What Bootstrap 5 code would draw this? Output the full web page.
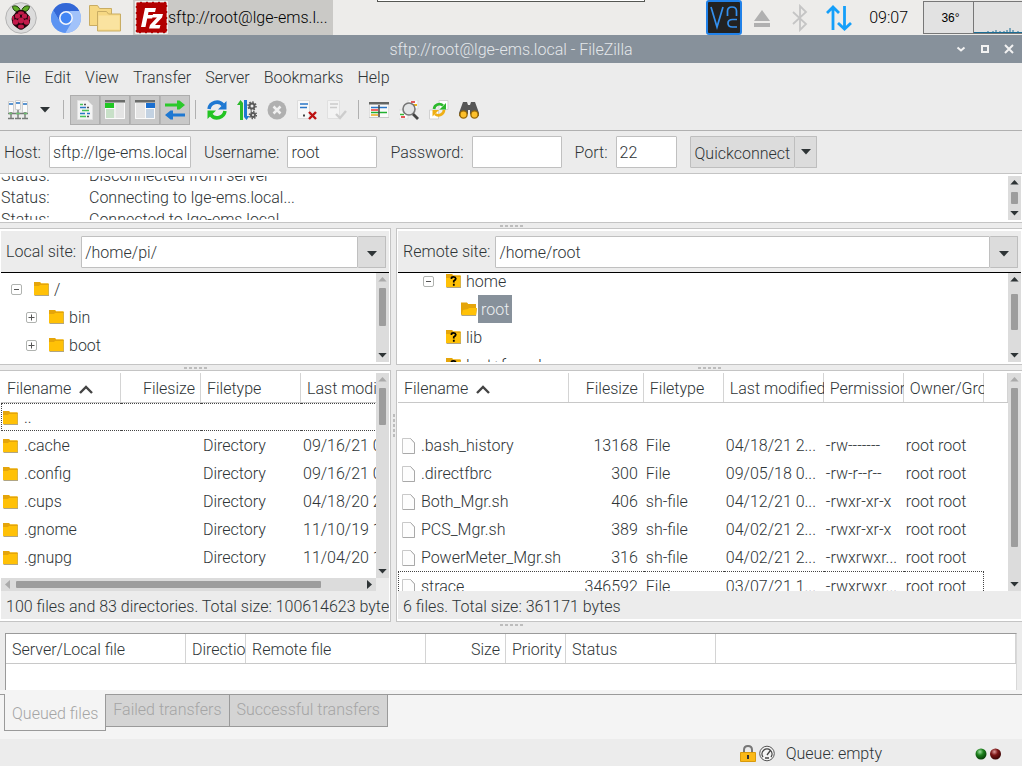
<!DOCTYPE html>
<html lang="en">
<head>
<meta charset="utf-8">
<meta name="viewport" content="width=device-width, initial-scale=1">
<title>sftp://root@lge-ems.local - FileZilla</title>
<link href="https://cdn.jsdelivr.net/npm/bootstrap@5.3.0/dist/css/bootstrap.min.css" rel="stylesheet">
<style>
:root{--ui:#ececec;--line:#c4c4c4;--ink:#2e3436;--slate:#87919b;--ctl:#dcdcdc;--dark:#9a9a9a}
body{font-family:Roboto,"Liberation Sans",sans-serif;font-weight:300;font-size:16px;line-height:20px;color:var(--ink);background:var(--ui);overflow:hidden}
svg{display:block;flex:none}
button{font:inherit;color:inherit;background:none;border:0;padding:0}
.desk{height:35px;background:#edecea;color:#000}
.launch{width:32px;height:32px}
.task{width:200px;height:35px;background:#cac9c6;padding-left:2px;margin-left:12px}
.notch{width:268px;height:2px;left:50%;transform:translateX(-50%);top:0;background:#fff;border:1px solid #555753;border-top:0}
.gauge-box{width:51px;height:33px;border:1px solid #777;background:#e2e2e2;font-family:"Liberation Sans",sans-serif;font-weight:400;font-size:12px;padding-left:4px;margin-left:15px}
.graph-box{width:48px;height:33px;border:1px solid #777;border-left:0;border-right:0;background:#e2e2e2}
.title-strip{height:28px;background:var(--slate);color:#e4e7ea;padding-top:1px}
.win-btns{right:5px;top:7px}
.menus{height:28px;padding:2px 0 0 6px;gap:14px}
.menus a{color:inherit;text-decoration:none}
.tools{height:40px;padding:0 3px 2px;border-bottom:1px solid #b0b0b0}
.tool{width:30px;height:30px;display:flex;align-items:center;justify-content:center}
.tool.on{background:#c8c8c8;border:1px solid #adadad}
.tool.on+.tool.on{border-left-color:#b4b4b4}
.vsep{width:1px;height:19px;background:#b0b0b0}
.quick{height:42px;padding:0 4px}
.quick label{padding-top:2px}
.quick input{margin:0 13px 0 8px}
.field{height:32px;border:1px solid #c0c0c0;border-radius:1px;background:#fff;padding:0 3px;color:var(--ink);font:inherit;min-width:0}
.btn-flat{height:32px;background:var(--ctl);border:1px solid #bebebe;border-radius:1px}
.frame{background:#fff;border:1px solid var(--line);padding:2px 1px}
.edge-l{border-left:0}
.edge-r{border-right:0}
.log{height:50px}
.log-lines{line-height:22px}
.log-lines span:first-child{display:inline-block;width:88px}
.grip-h{height:5px;display:flex;align-items:center;justify-content:center}
.grip-h::after{content:"";width:23px;height:2px;background:repeating-linear-gradient(90deg,#bdbdbd 0 3px,transparent 3px 5px)}
.grip-v{width:5px;display:flex;align-items:center;justify-content:center}
.grip-v::after{content:"";width:2px;height:23px;background:repeating-linear-gradient(#bdbdbd 0 3px,transparent 3px 5px)}
.side-l{flex:391 1 0;min-width:0}
.side-r{flex:626 1 0;min-width:0}
.tree-frame{height:137px}
.site{height:42px;background:var(--ui);border-bottom:1px solid #000;padding:5px 3px 4px 5px}
.site label{line-height:32px;margin-right:5px}
.combo-btn{width:28px}
.clip{overflow:hidden;min-width:0}
.branch{height:28px;display:flex;align-items:center;list-style:none}
.knob{width:11px;height:11px;border:1px solid #b0b3b0;border-radius:2px;background:#fff;margin-right:12px}
.tree{padding:2px 0 0 10px;margin:0}
.tree.scrolled{margin-top:-6px;padding:0 0 0 25px}
.tag{padding:0 3px;margin-left:2px;height:28px;line-height:30px}
.tag.picked{background:var(--slate);color:#eceff1;margin-left:1px}
.indent{padding-left:15px}
.indent-2{padding-left:23px}
.indent-3{padding-left:38px}
.vbar{width:13px;flex:none;background:var(--ctl);display:flex;flex-direction:column;align-items:center;padding:4px 0}
.thumb{background:#9d9d9d;border-radius:1px}
.vbar .thumb{width:7px}
.hbar{height:13px;background:var(--ctl);display:flex;align-items:center;padding:0 4px}
.hbar .thumb{height:7px}
.grid{table-layout:fixed;border-collapse:separate;border-spacing:0;white-space:nowrap}
.grid th{font-weight:300;height:30px;padding:2px 3px 0 6px;border-bottom:1px solid #c8c8c8;background:linear-gradient(90deg,#d4d4d4,#d4d4d4) right/1px 100% no-repeat;overflow:hidden}
.grid td{height:28px;padding:2px 3px 0 2px;overflow:hidden;text-overflow:ellipsis}
.grid .num{text-align:right;padding-right:6px}
.grid th svg,.grid td svg{display:inline-block;vertical-align:-2px}
.grid td svg{margin-right:2px}
.grid .sorted{vertical-align:0}
.focus-row td{border-top:1px dotted #444;border-bottom:1px dotted #444}
.focus-row td:first-child{border-left:1px dotted #444;padding-left:1px}
.remote .focus-row td{border-bottom:0}
.remote .focus-row .last{border-right:1px dotted #444}
.remote td:first-child{padding-left:4px}
.remote .focus-row td:first-child{padding-left:3px}
.remote td svg{vertical-align:-3px}
.tally{height:28px;background:var(--ui);padding-left:5px;line-height:32px;white-space:nowrap;overflow:hidden}
.queue{margin:0 5px;height:57px;background:#fff;border:1px solid var(--dark);border-right-color:#d8d8d8;border-bottom:0;overflow:hidden}
.gap-h{height:11px;padding-bottom:6px}
.book{background:#f4f4f4;height:49px;padding-top:4px;color:#a5a5a5}
.rule{border-top:1px solid var(--dark)}
.tab-pg{height:33px;padding:0 7px 2px;background:#d4d4d4;border:1px solid var(--dark);border-left:0}
.tab-pg.now{height:37px;padding:3px 7px 0;background:#f4f4f4;border:1px solid var(--dark);border-top:0}
.foot{height:27px;padding:2px 21px 0 0}
</style>
</head>
<body class="d-flex flex-column vh-100">
<svg width="0" height="0" class="position-absolute" aria-hidden="true">
<defs>
<symbol id="fold" viewBox="0 0 15 14"><path d="M0 1h5l2 1h8v12H1L0 13z" fill="#b0a584"/><path d="M0 0h6l1 1.500h7.500V13H0z" fill="#ffc107"/><path d="M0 0h6l1 1.500h7.500V3H6L5 4H0z" fill="#e5a50a"/></symbol>
<symbol id="foldopen" viewBox="0 0 16 14"><path d="M0 1h6l1 1h8v4h1l-1 8H1L0 13z" fill="#b0a584"/><path d="M0 .5h6L7 2h8v10H0z" fill="#e5a50a"/><path d="M2 8 7 7l1-1h8l-1 7H.5z" fill="#ffc107"/></symbol>
<symbol id="foldq" viewBox="0 0 15 14"><use href="#fold"/><path d="M5.500 5V4Q5.500 2.800 7.500 2.800T9.800 4.600Q9.800 6 7.800 7V8.500M7.800 9.800v2" fill="none" stroke="#000" stroke-width="1.800"/></symbol>
<symbol id="doc" viewBox="0 0 13 16"><path d="M.5 .5h8l4 4v11H.5z" fill="#fdfdfd" stroke="#c9c9c9"/><path d="M8.500 .5 12.500 5v10.500H1" fill="none" stroke="#a9a9a9"/></symbol>
<symbol id="dn" viewBox="0 0 10 6"><path d="M0 0h10L5 5.500z" fill="currentColor"/></symbol>
<symbol id="up" viewBox="0 0 10 6"><path d="M0 5.500h10L5 0z" fill="currentColor"/></symbol>
<symbol id="sort" viewBox="0 0 14 9"><path d="M1 8 7 2l6 6" fill="none" stroke="#444" stroke-width="2.400"/></symbol>
<symbol id="pc" viewBox="0 0 20 20"><path d="M.5 1.500h5v11h-5zM7.500 .5h5v9h-5zM14.500 1.500h5v11h-5z" fill="#fbfbfb" stroke="#cfcfcf"/><path d="M1 4h4M8 3h4M15 4h4" stroke="#5a94d0" stroke-width="2"/><path d="M0 13.500h20M3 12v6M10 10v8M17 12v6M0 18.500h6M7 18.500h6M14 18.500h6" stroke="#777b78" stroke-width="1.400"/><path d="M1 13.500h3M8 13.500h4M16 13.500h3" stroke="#6dbf70" stroke-width="1.400"/></symbol>
<symbol id="minus" viewBox="0 0 9 9"><path d="M2 4.500h5" stroke="#555"/></symbol>
<symbol id="plus" viewBox="0 0 9 9"><path d="M1.500 4.500h6M4.500 1.500v6" stroke="#555"/></symbol>
<radialGradient id="ga" cx=".4" cy=".3" r=".7"><stop offset="0" stop-color="#9ee09e"/><stop offset=".45" stop-color="#1d801d"/><stop offset="1" stop-color="#063c06"/></radialGradient>
<radialGradient id="gb" cx=".4" cy=".3" r=".7"><stop offset="0" stop-color="#d99"/><stop offset=".45" stop-color="#7c1515"/><stop offset="1" stop-color="#380404"/></radialGradient>
</defs>
</svg>

<header class="desk d-flex align-items-center position-relative flex-shrink-0">
  <div class="notch position-absolute"></div>
  <button class="launch" style="margin-left:5px" aria-label="Applications"><svg width="32" height="32" viewBox="0 0 32 32"><circle cx="16" cy="16" r="15.300" fill="#dcdcdc" stroke="#b4b4b4"/><path d="M15.500 9C14 4 10 3 7.500 4.500 8 8.500 11 10.500 15.500 9zM16.500 9C18 4 22 3 24.500 4.500 24 8.500 21 10.500 16.500 9z" fill="#5fae27" stroke="#1e3a0c"/><path d="M16 8c-4 0-5 2-6.500 4-2 2-3.500 3.500-2.500 7 0 4 4 6 6 7.500q3 2.500 6 0c2-1.500 6-3.500 6-7.500 1-3.500-.5-5-2.500-7C21 10 20 8 16 8z" fill="#22050d"/><g fill="#c31a4a"><ellipse cx="16" cy="11" rx="3" ry="1.700"/><circle cx="12.500" cy="14" r="2.600"/><circle cx="19.500" cy="14" r="2.600"/><circle cx="16" cy="18.500" r="3"/><circle cx="10.500" cy="20" r="2.800"/><circle cx="21.500" cy="20" r="2.800"/><ellipse cx="16" cy="24.500" rx="3" ry="2"/><ellipse cx="8.200" cy="16" rx="1.100" ry="2.200"/><ellipse cx="23.800" cy="16" rx="1.100" ry="2.200"/></g></svg></button>
  <button class="launch" style="margin-left:13px" aria-label="Web browser"><svg width="32" height="32" viewBox="0 0 32 32"><circle cx="16" cy="16" r="15" fill="#7baaf7"/><path d="M16 1A15 15 0 0 0 3.200 8.200L9.800 19.500 16 9h13.300A15 15 0 0 0 16 1z" fill="#3367d6"/><path d="M3.200 8.200A15 15 0 0 0 15.500 31l7-12L16 23l-6.200-3.500z" fill="#5c94f2"/><path d="M29.300 9A15 15 0 0 1 15.500 31l6.700-11.500Q24 14 20 9z" fill="#a1c2fa"/><circle cx="16" cy="16" r="7" fill="#f2f5fb"/><circle cx="16" cy="16" r="5.400" fill="#4285f4"/></svg></button>
  <button class="launch" style="margin-left:7px" aria-label="File manager"><svg width="32" height="32" viewBox="0 0 32 32"><g fill="#f6d883" stroke="#c9ad64"><path d="M.5 3.500h8l2 3h12v17H.5z"/><path d="M8.500 9.500h9l2 2.500h12v17h-23z"/></g><path d="M9.500 13.500h21v14h-21z" fill="#fae3a0"/></svg></button>
  <button class="task d-flex align-items-center text-start"><svg width="33" height="33" viewBox="0 0 33 33"><rect x="1" y="1" width="31" height="31" fill="#b50000" stroke="#fff" stroke-width="1.500" stroke-dasharray="4 2"/><rect x="1.500" y="1.500" width="30" height="30" fill="#b20000"/><path d="M6 26 10 7h11l-1 4h-6.500L13 14h5l-.8 3.500h-5L10.500 26zM18 13h10l-1 3.500L20 24h5.500l-1 3.500H14l1-3.500 7-7.500h-5z" fill="#fff"/></svg>sftp://root@lge-ems.l...</button>
  <div class="ms-auto d-flex align-items-center">
    <svg width="36" height="35" viewBox="0 0 36 35"><rect x="1" y="1" width="34" height="33" rx="2" fill="#222" stroke="#2181e8" stroke-width="2"/><path d="m5 7 6 20 6-20M21.500 16v-5Q21.500 7 26 7t4.500 4v5M31 19.500h-4.500q-4.500 0-4.500 3.800T26.500 27H31" fill="none" stroke="#3490ee" stroke-width="1.700"/></svg>
    <svg width="16" height="18" viewBox="0 0 16 18" style="margin-left:12px"><path d="M0 12 8 1l8 11zM0 14h16v4H0z" fill="#b0b0b0"/></svg>
    <svg width="16" height="28" viewBox="0 0 16 28" style="margin-left:22px"><path d="m1 8 13 12-6 6V2l6 6L1 20" fill="none" stroke="#c5c5c5" stroke-width="1.800"/></svg>
    <svg width="26" height="26" viewBox="0 0 26 26" style="margin-left:18px"><path d="M7 25V2M1 8l6-6 6 6M18.500 1v23M12 18l6.500 6 6.500-6" fill="none" stroke="#149ffa" stroke-width="2.800"/></svg>
    <span style="margin-left:17px">09:07</span>
    <div class="gauge-box d-flex align-items-center justify-content-center">36°</div>
    <div class="graph-box d-flex align-items-end"><svg width="48" height="5" viewBox="0 0 48 5"><path d="M0 4.500h49M14 3v2M19 3v2M22 2v3M26 3v2M30 3v2M33 2v3M36 0v5M39 2v3M44 3v2" stroke="#1b6c94"/></svg></div>
  </div>
</header>

<div class="title-strip d-flex align-items-center justify-content-center position-relative flex-shrink-0">
  <span>sftp://root@lge-ems.local - FileZilla</span>
  <div class="win-btns position-absolute d-flex gap-2">
    <button aria-label="Minimise"><svg width="16" height="14" viewBox="0 0 16 14"><path d="m4.500 5.500 3.500 3 3.500-3" fill="none" stroke="#f2f2f2" stroke-width="2"/></svg></button>
    <button aria-label="Maximise"><svg width="16" height="14" viewBox="0 0 16 14"><path d="M5 4h6v6H5z" fill="none" stroke="#f2f2f2" stroke-width="2"/></svg></button>
    <button aria-label="Close"><svg width="16" height="14" viewBox="0 0 16 14"><path d="m4 3 8 8m0-8-8 8" fill="none" stroke="#f2f2f2" stroke-width="2"/></svg></button>
  </div>
</div>

<nav class="menus d-flex align-items-center flex-shrink-0">
  <a href="#">File</a><a href="#">Edit</a><a href="#">View</a><a href="#">Transfer</a><a href="#">Server</a><a href="#">Bookmarks</a><a href="#">Help</a>
</nav>

<div class="tools d-flex align-items-center flex-shrink-0">
  <button class="tool" aria-label="Site manager"><svg width="20" height="20"><use href="#pc"/></svg></button>
  <button class="tool" style="width:24px" aria-label="Site list"><svg width="10" height="6"><use href="#dn"/></svg></button>
  <i class="vsep" style="margin:0 6px"></i>
  <button class="tool on" aria-label="Message log"><svg width="16" height="20" viewBox="0 0 16 20"><path d="M.5 .5h10l5 5v14H.5z" fill="#f4f4f4" stroke="#e0e0e0"/><path d="M3 4.500h3M5 10.500h7M3 16.500h6" stroke="#46c35a" stroke-width="1.400"/><path d="M3 7.500h6M3 13.500h5M10 13.500h3" stroke="#2a76c6" stroke-width="1.400"/><path d="M10 7.500h2M7 4.500h2M10 16.500h2" stroke="#555" stroke-width="1.400"/></svg></button>
  <button class="tool on" aria-label="Local tree"><svg width="20" height="19" viewBox="0 0 20 19"><path d="M0 0h20v19H0z" fill="#e4e4e4"/><path d="M10 3v16M0 8.500h10M.5 3v15.500h19V3" fill="none" stroke="#fafafa"/><path d="M0 0h20v2.500H0z" fill="#6a6c6a"/><path d="M0 3h9v5H0z" fill="#1fc723"/><path d="M1 9h8v9H1z" fill="#c8e0c8"/></svg></button>
  <button class="tool on" aria-label="Remote tree"><svg width="20" height="19" viewBox="0 0 20 19"><path d="M0 0h20v19H0z" fill="#e4e4e4"/><path d="M10.500 3v16M11 8.500h9M.5 3v15.500h19V3" fill="none" stroke="#fafafa"/><path d="M0 0h20v2.500H0z" fill="#6a6c6a"/><path d="M11 3h9v5h-9z" fill="#1a6fd0"/><path d="M11 9h8v9h-8z" fill="#c3d2e2"/></svg></button>
  <button class="tool on" aria-label="Transfer queue"><svg width="20" height="20" viewBox="0 0 20 20"><path d="M0 3.500h12V.5l2.500 0 5.500 4.500-5.500 4.500H12V6.500H0z" fill="#2bc92b"/><path d="M20 13.500H8v-3H5.500L0 15l5.500 4.500H8v-3h12z" fill="#1e78d2"/></svg></button>
  <i class="vsep" style="margin:0 6px 0 5px"></i>
  <button class="tool" aria-label="Refresh"><svg width="20" height="20" viewBox="0 0 20 20"><path d="M2 9a8 8 0 0 1 14-4" fill="none" stroke="#1e78d2" stroke-width="3.500"/><path d="M19.500 1v8.500H11z" fill="#1e78d2"/><path d="M18 11a8 8 0 0 1-14 4" fill="none" stroke="#22c422" stroke-width="3.500"/><path d="M.5 19v-8.500H9z" fill="#22c422"/></svg></button>
  <button class="tool" aria-label="Process queue"><svg width="20" height="20" viewBox="0 0 20 20"><path d="M3 20V5H0l3.500-5L6 3V20z" fill="#2bb92b"/><path d="M7 0v17l2.500 3 3-4H10V0z" fill="#1e78d2"/><g fill="none" stroke="#595959"><circle cx="15" cy="6" r="2.500" stroke-width="2"/><circle cx="15" cy="6" r="4" stroke-width="1.500" stroke-dasharray="1.600 1.500"/><circle cx="16" cy="15" r="2" stroke-width="2"/><circle cx="16" cy="15" r="3.500" stroke-width="1.500" stroke-dasharray="1.400 1.300"/></g></svg></button>
  <button class="tool" aria-label="Cancel" disabled><svg width="20" height="20" viewBox="0 0 20 20"><circle cx="10" cy="10" r="9.500" fill="#b0b0b0"/><path d="m6.500 6.500 7 7m0-7-7 7" stroke="#f0f0f0" stroke-width="2.500"/></svg></button>
  <button class="tool" aria-label="Disconnect"><svg width="20" height="20" viewBox="0 0 20 20"><path d="M.5 .5h12v18H.5z" fill="#f8f8f8" stroke="#ddd"/><path d="M3 4h8M3 7.500h7" stroke="#2a76c6" stroke-width="1.600"/><path d="M6 15.500h2" stroke="#444" stroke-width="2"/><path d="m12 12 7 7m0-7-7 7" stroke="#bc1111" stroke-width="2.400"/></svg></button>
  <button class="tool" aria-label="Reconnect" disabled><svg width="20" height="20" viewBox="0 0 20 20"><path d="M.5 .5h12v18H.5z" fill="#f3f3f3" stroke="#e0e0e0"/><path d="M3 4h8M3 7.500h7" stroke="#ccc" stroke-width="1.600"/><path d="m9 14 4 4 6-7" fill="none" stroke="#cdcdcd" stroke-width="2.400"/></svg></button>
  <i class="vsep" style="margin:0 5px 0 6px"></i>
  <button class="tool" aria-label="Filters"><svg width="20" height="16" viewBox="0 0 20 16"><path d="M0 0h20v15.500H0z" fill="#fafafa" stroke="#c8c8c8"/><path d="M0 0h20v2.500H0z" fill="#646664"/><path d="M2 5.500h16" stroke="#2a76c6" stroke-width="1.500"/><path d="M2 8h7" stroke="#e33" stroke-width="1.500"/><path d="M2 10.500h16" stroke="#22b030" stroke-width="1.500"/><path d="M2 13h7" stroke="#eba91b" stroke-width="1.500"/><path d="M10 3v12" stroke="#444" stroke-width="1.500"/></svg></button>
  <button class="tool" aria-label="Compare directories"><svg width="20" height="20" viewBox="0 0 20 20"><path d="M9 0h10v9H9zM0 10h9v9H0z" fill="#fafafa" stroke="#ddd"/><path d="M12 2h4M2 17h4" stroke="#d22" stroke-width="1.500"/><path d="M14 5h4" stroke="#e9b019" stroke-width="2"/><path d="M1 14.500h4" stroke="#38b538" stroke-width="1.500"/><circle cx="10" cy="9" r="6" fill="#e3e5e6" stroke="#777" stroke-width="1.600"/><path d="m14 14 5 5" stroke="#444" stroke-width="2.800"/></svg></button>
  <button class="tool" aria-label="Synchronised browsing"><svg width="20" height="20" viewBox="0 0 20 20"><path d="M10 .5h9v9h-9zM.5 10h9v9h-9z" fill="#fff" stroke="#d2d2d2"/><path d="M5 9a5.500 5.500 0 0 1 9-3.500" fill="none" stroke="#2bb92b" stroke-width="2.700"/><path d="M17 3v6.500h-6.500z" fill="#2bb92b"/><path d="M15 10a5.500 5.500 0 0 1-9 4" fill="none" stroke="#efaf15" stroke-width="2.700"/><path d="M3.500 16.500V10H10z" fill="#efaf15"/></svg></button>
  <button class="tool" aria-label="Find files"><svg width="20" height="18" viewBox="0 0 20 18"><path d="M4 1h4l1 3h2l1-3h4l4 11v3l-9-2V9H9v4l-9 2v-3z" fill="#565656"/><circle cx="4.500" cy="13.500" r="3.600" fill="#fdc02a" stroke="#9a6a05" stroke-width="1.400"/><circle cx="15.500" cy="13.500" r="3.600" fill="#fdc02a" stroke="#9a6a05" stroke-width="1.400"/></svg></button>
</div>

<form class="quick d-flex align-items-center flex-shrink-0" onsubmit="return false">
  <label for="host">Host:</label><input id="host" class="field" style="width:142px" value="sftp://lge-ems.local">
  <label for="user">Username:</label><input id="user" class="field" style="width:90px" value="root">
  <label for="pass">Password:</label><input id="pass" type="password" class="field" style="width:90px">
  <label for="port">Port:</label><input id="port" class="field" style="width:61px" value="22">
  <button type="submit" class="btn-flat px-1 pt-1">Quickconnect</button><button type="button" class="btn-flat d-flex align-items-center justify-content-center border-start-0" style="width:22px" aria-label="Recent servers"><svg width="10" height="6"><use href="#dn"/></svg></button>
</form>

<section class="frame edge-l edge-r log d-flex flex-shrink-0">
  <div class="log-lines clip flex-grow-1 d-flex flex-column justify-content-center">
    <div><span>Status:</span><span>Disconnected from server</span></div>
    <div><span>Status:</span><span>Connecting to lge-ems.local...</span></div>
    <div><span>Status:</span><span>Connected to lge-ems.local</span></div>
  </div>
  <div class="vbar justify-content-between"><svg width="9" height="5"><use href="#up"/></svg><div class="thumb" style="height:12px"></div><svg width="9" height="5"><use href="#dn"/></svg></div>
</section>
<div class="grip-h flex-shrink-0"></div>

<main class="d-flex flex-grow-1" style="min-height:0">
  <section class="side-l d-flex flex-column">
    <div class="frame edge-l tree-frame d-flex flex-column flex-shrink-0">
      <div class="site d-flex flex-shrink-0"><label for="lsite" class="flex-shrink-0">Local site:</label><input id="lsite" class="field flex-grow-1" value="/home/pi/"><button class="btn-flat combo-btn d-flex align-items-center justify-content-center border-start-0 pt-1" aria-label="Local history"><svg width="10" height="6"><use href="#dn"/></svg></button></div>
      <div class="d-flex flex-grow-1 clip">
        <ul class="tree clip flex-grow-1">
          <li class="branch"><svg class="knob"><use href="#minus"/></svg><svg width="15" height="14"><use href="#fold"/></svg><span class="tag">/</span></li>
          <li class="branch indent"><svg class="knob"><use href="#plus"/></svg><svg width="15" height="14"><use href="#fold"/></svg><span class="tag">bin</span></li>
          <li class="branch indent"><svg class="knob"><use href="#plus"/></svg><svg width="15" height="14"><use href="#fold"/></svg><span class="tag">boot</span></li>
        </ul>
        <div class="vbar"><svg width="9" height="5" color="#aaa"><use href="#up"/></svg><div class="thumb mb-auto" style="height:38px;margin-top:6px"></div><svg width="9" height="5"><use href="#dn"/></svg></div>
      </div>
    </div>
    <div class="grip-h flex-shrink-0"></div>
    <div class="frame edge-l d-flex flex-column flex-grow-1 clip">
      <div class="d-flex flex-grow-1 clip">
        <div class="clip flex-grow-1">
          <table class="grid" style="width:460px">
            <colgroup><col style="width:120px"><col style="width:80px"><col style="width:100px"><col style="width:100px"><col></colgroup>
            <thead><tr><th>Filename <svg width="14" height="9" class="sorted ms-1"><use href="#sort"/></svg></th><th class="num">Filesize</th><th>Filetype</th><th>Last modified</th><th></th></tr></thead>
            <tbody>
              <tr class="focus-row"><td><svg width="15" height="14"><use href="#fold"/></svg> ..</td><td></td><td></td><td></td><td></td></tr>
              <tr><td><svg width="15" height="14"><use href="#fold"/></svg> .cache</td><td></td><td>Directory</td><td>09/16/21 0...</td><td></td></tr>
              <tr><td><svg width="15" height="14"><use href="#fold"/></svg> .config</td><td></td><td>Directory</td><td>09/16/21 0...</td><td></td></tr>
              <tr><td><svg width="15" height="14"><use href="#fold"/></svg> .cups</td><td></td><td>Directory</td><td>04/18/20 2...</td><td></td></tr>
              <tr><td><svg width="15" height="14"><use href="#fold"/></svg> .gnome</td><td></td><td>Directory</td><td>11/10/19 1...</td><td></td></tr>
              <tr><td><svg width="15" height="14"><use href="#fold"/></svg> .gnupg</td><td></td><td>Directory</td><td>11/04/20 1...</td><td></td></tr>
            </tbody>
          </table>
        </div>
        <div class="vbar"><svg width="9" height="5" color="#aaa"><use href="#up"/></svg><div class="thumb mb-auto" style="height:37px;margin-top:6px"></div><svg width="9" height="5"><use href="#dn"/></svg></div>
      </div>
      <div class="d-flex flex-shrink-0" style="background:var(--ui)">
        <div class="hbar flex-grow-1" style="margin-right:13px"><svg width="5" height="9" viewBox="0 0 5 9"><path d="M5 0v9L0 4.500z" fill="#aaa"/></svg><div class="thumb me-auto" style="width:83%;margin-left:6px"></div><svg width="5" height="9" viewBox="0 0 5 9"><path d="M0 0v9l5-4.500z" fill="#2e3436"/></svg></div>
      </div>
      <div class="tally flex-shrink-0">100 files and 83 directories. Total size: 100614623 bytes</div>
    </div>
  </section>

  <div class="grip-v flex-shrink-0"></div>

  <section class="side-r d-flex flex-column">
    <div class="frame edge-r tree-frame d-flex flex-column flex-shrink-0">
      <div class="site d-flex flex-shrink-0"><label for="rsite" class="flex-shrink-0">Remote site:</label><input id="rsite" class="field flex-grow-1" value="/home/root"><button class="btn-flat combo-btn d-flex align-items-center justify-content-center border-start-0 pt-1" aria-label="Remote history"><svg width="10" height="6"><use href="#dn"/></svg></button></div>
      <div class="d-flex flex-grow-1 clip">
        <div class="clip flex-grow-1">
        <ul class="tree scrolled">
          <li class="branch"><svg class="knob"><use href="#minus"/></svg><svg width="15" height="14"><use href="#foldq"/></svg><span class="tag">home</span></li>
          <li class="branch indent-3"><svg width="16" height="14"><use href="#foldopen"/></svg><span class="tag picked">root</span></li>
          <li class="branch indent-2"><svg width="15" height="14"><use href="#foldq"/></svg><span class="tag">lib</span></li>
          <li class="branch indent-2"><svg width="15" height="14"><use href="#foldq"/></svg><span class="tag">lost+found</span></li>
        </ul>
        </div>
        <div class="vbar"><svg width="9" height="5"><use href="#up"/></svg><div class="thumb mb-auto" style="height:36px;margin-top:12px"></div><svg width="9" height="5"><use href="#dn"/></svg></div>
      </div>
    </div>
    <div class="grip-h flex-shrink-0"></div>
    <div class="frame edge-r d-flex flex-column flex-grow-1 clip">
      <div class="d-flex flex-grow-1 clip">
        <div class="clip flex-grow-1">
          <table class="grid remote w-100">
            <colgroup><col style="width:28%"><col style="width:75px"><col style="width:80px"><col style="width:100px"><col style="width:80px"><col style="width:80px"><col></colgroup>
            <thead><tr><th>Filename <svg width="14" height="9" class="sorted ms-1"><use href="#sort"/></svg></th><th class="num">Filesize</th><th>Filetype</th><th>Last modified</th><th>Permissions</th><th>Owner/Group</th><th></th></tr></thead>
            <tbody>
              <tr><td></td><td></td><td></td><td></td><td></td><td></td><td></td></tr>
              <tr><td><svg width="13" height="16"><use href="#doc"/></svg> .bash_history</td><td class="num">13168</td><td>File</td><td>04/18/21 2...</td><td>-rw-------</td><td>root root</td><td></td></tr>
              <tr><td><svg width="13" height="16"><use href="#doc"/></svg> .directfbrc</td><td class="num">300</td><td>File</td><td>09/05/18 0...</td><td>-rw-r--r--</td><td>root root</td><td></td></tr>
              <tr><td><svg width="13" height="16"><use href="#doc"/></svg> Both_Mgr.sh</td><td class="num">406</td><td>sh-file</td><td>04/12/21 0...</td><td>-rwxr-xr-x</td><td>root root</td><td></td></tr>
              <tr><td><svg width="13" height="16"><use href="#doc"/></svg> PCS_Mgr.sh</td><td class="num">389</td><td>sh-file</td><td>04/02/21 2...</td><td>-rwxr-xr-x</td><td>root root</td><td></td></tr>
              <tr><td><svg width="13" height="16"><use href="#doc"/></svg> PowerMeter_Mgr.sh</td><td class="num">316</td><td>sh-file</td><td>04/02/21 2...</td><td>-rwxrwxr...</td><td>root root</td><td></td></tr>
              <tr class="focus-row"><td><svg width="13" height="16"><use href="#doc"/></svg> strace</td><td class="num">346592</td><td>File</td><td>03/07/21 1...</td><td>-rwxrwxr...</td><td class="last">root root</td><td class="border-0"></td></tr>
            </tbody>
          </table>
        </div>
        <div class="vbar"><svg width="9" height="5" color="#aaa"><use href="#up"/></svg><div class="thumb mb-auto" style="height:159px;margin-top:6px"></div><svg width="9" height="5"><use href="#dn"/></svg></div>
      </div>
      <div class="tally flex-shrink-0">6 files. Total size: 361171 bytes</div>
    </div>
  </section>
</main>
<div class="grip-h gap-h flex-shrink-0"></div>

<section class="queue flex-shrink-0">
  <table class="grid w-100">
    <colgroup><col style="width:180px"><col style="width:60px"><col style="width:180px"><col style="width:80px"><col style="width:60px"><col style="width:150px"><col></colgroup>
    <thead><tr><th>Server/Local file</th><th>Direction</th><th>Remote file</th><th class="num">Size</th><th>Priority</th><th>Status</th><th></th></tr></thead>
  </table>
</section>
<div class="book d-flex align-items-start flex-shrink-0">
  <div class="rule" style="width:4px"></div>
  <button class="tab-pg now">Queued files</button><button class="tab-pg">Failed transfers</button><button class="tab-pg">Successful transfers</button>
  <div class="rule flex-grow-1"></div>
</div>

<footer class="foot d-flex align-items-center justify-content-end flex-shrink-0">
  <svg width="16" height="17" viewBox="0 0 16 17"><path d="M4 9V5q0-4 4-4t4 4v4" fill="none" stroke="#777" stroke-width="2"/><path d="M.5 7.500h15v9H.5z" fill="#fbb917" stroke="#d99a0b"/><path d="M8 10v4" stroke="#333" stroke-width="2"/></svg>
  <svg width="16" height="17" viewBox="0 0 16 17" style="margin-left:3px"><circle cx="8" cy="8.500" r="7.300" fill="#f4f4f4" stroke="#555"/><path d="M4 12a5 5 0 1 1 8 0M8 10l3-4M6 13h4" fill="none" stroke="#444" stroke-width="1.300"/></svg>
  <span style="margin:1px 93px 0 11px">Queue: empty</span>
  <svg width="26" height="12" viewBox="0 0 26 12"><circle cx="6" cy="6" r="5.500" fill="url(#ga)"/><circle cx="20.500" cy="6" r="5.500" fill="url(#gb)"/></svg>
</footer>
<script src="https://cdn.jsdelivr.net/npm/bootstrap@5.3.0/dist/js/bootstrap.bundle.min.js"></script>
</body>
</html>
